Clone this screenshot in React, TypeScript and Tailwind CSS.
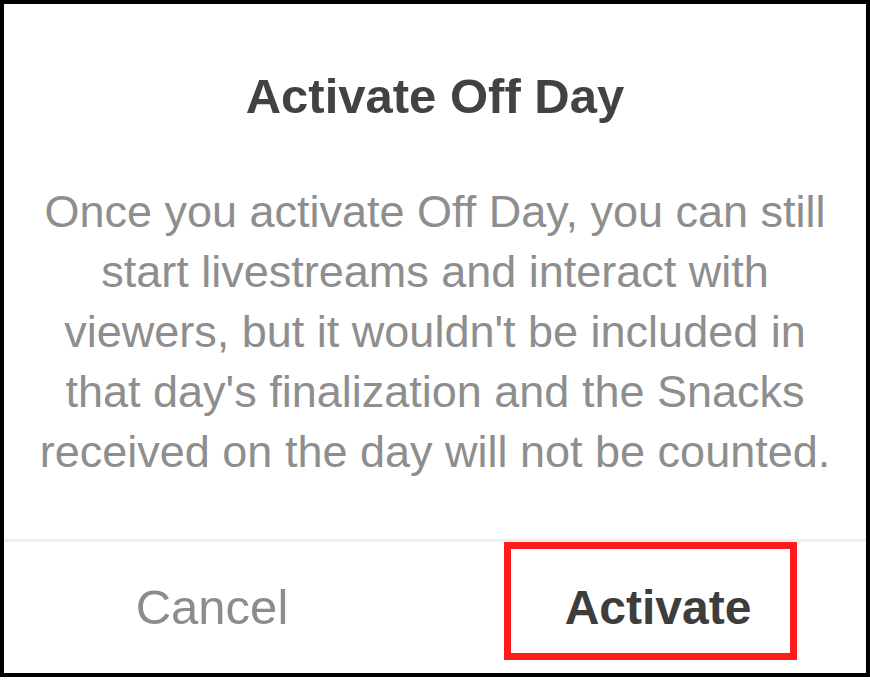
export default function App() {
  const lines = [
    "Once you activate Off Day, you can still",
    "start livestreams and interact with",
    "viewers, but it wouldn't be included in",
    "that day's finalization and the Snacks",
    "received on the day will not be counted.",
  ]

  return (
    <div className="w-[870px] h-[683px] bg-white font-['Liberation_Sans',Arial,sans-serif]">
      <div className="h-[677px] border-4 border-black flex flex-col">
        {/* Title */}
        <h1 className="pt-[62px] text-center text-[49px] leading-[60px] font-bold text-[#424242]">
          Activate Off Day
        </h1>

        {/* Message */}
        <div className="mt-[56px] flex flex-col items-center text-[45px] leading-[60px] text-[#8e8e8e]">
          {lines.map((line) => (
            <span key={line} className="whitespace-nowrap">
              {line}
            </span>
          ))}
        </div>

        <div className="flex-1" />
        <div className="h-[3px] bg-[#eeeeee]" />

        {/* Actions */}
        <div className="relative flex h-[131px]">
          <button className="flex-1 flex items-center justify-center pr-[12px] text-[49px] text-[#8c8c8c]">
            Cancel
          </button>
          <button className="flex-1 flex items-center justify-center pl-[18px] text-[48px] font-bold text-[#3d3d3d]">
            Activate
          </button>
          <div className="absolute left-[500px] top-0 w-[293px] h-[118px] border-[7px] border-[#fe1b1b]" />
        </div>
      </div>
    </div>
  )
}
